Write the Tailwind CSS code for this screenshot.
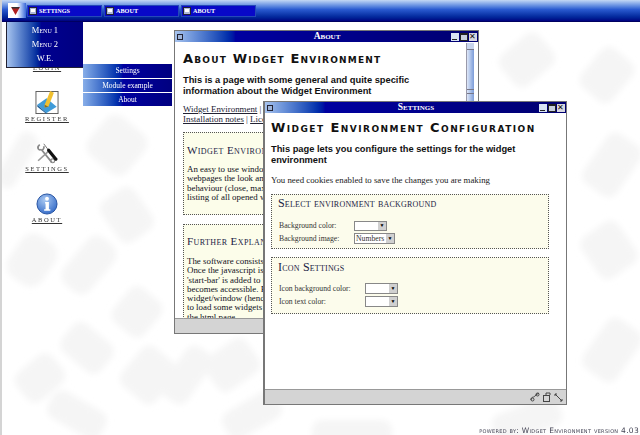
<!DOCTYPE html>
<html lang="en">
<head>
    <meta charset="UTF-8">
    <title>Widget Environment</title>
    <script src="https://cdn.jsdelivr.net/npm/@tailwindcss/browser@4"></script>
</head>
<body class="bg-white">
<div class="relative w-[640px] h-[435px] overflow-hidden bg-white border-l-2 border-[#d4d4d4] font-['Liberation_Serif',serif]">

    <!-- Faded wallpaper -->
    <svg class="absolute left-0 top-0" width="640" height="435" fill="#f5f5f5">
        <defs><filter id="soft"><feGaussianBlur stdDeviation="3"/></filter></defs>
        <g filter="url(#soft)">
            <rect x="10" y="235" width="40" height="50" rx="14" transform="rotate(35 30 260)"/>
            <rect x="70" y="235" width="34" height="60" rx="12" transform="rotate(40 87 265)"/>
            <rect x="115" y="290" width="40" height="44" rx="10" transform="rotate(40 135 312)"/>
            <rect x="60" y="330" width="50" height="36" rx="10" transform="rotate(40 85 348)"/>
            <rect x="15" y="360" width="46" height="36" rx="10" transform="rotate(-40 38 378)"/>
            <rect x="125" y="350" width="44" height="50" rx="10" transform="rotate(40 147 375)"/>
            <rect x="45" y="400" width="60" height="30" rx="10" transform="rotate(30 75 415)"/>
            <rect x="170" y="345" width="30" height="60" rx="10" transform="rotate(35 185 375)"/>
            <rect x="205" y="345" width="50" height="40" rx="10" transform="rotate(-35 230 365)"/>
            <rect x="220" y="400" width="60" height="30" rx="10" transform="rotate(-30 250 415)"/>
            <rect x="310" y="420" width="80" height="30" rx="10"/>
            <rect x="585" y="50" width="40" height="50" rx="10" transform="rotate(40 605 75)"/>
            <rect x="500" y="40" width="50" height="40" rx="10" transform="rotate(-40 525 60)"/>
            <rect x="590" y="135" width="40" height="60" rx="10" transform="rotate(35 610 165)"/>
            <rect x="585" y="225" width="44" height="50" rx="10" transform="rotate(-35 607 250)"/>
            <rect x="590" y="320" width="40" height="60" rx="10" transform="rotate(35 610 350)"/>
            <rect x="490" y="405" width="70" height="30" rx="10" transform="rotate(-20 525 420)"/>
            <rect x="90" y="120" width="50" height="50" rx="12" transform="rotate(40 115 145)"/>
            <rect x="105" y="190" width="40" height="50" rx="10" transform="rotate(-35 125 215)"/>
            <rect x="5" y="130" width="20" height="60" rx="8" transform="rotate(30 15 160)"/>
        </g>
    </svg>

    <!-- Desktop icons -->
    <div class="absolute left-[2px] top-[64px] w-[86px] flex flex-col items-center text-[6.5px] leading-[7px] uppercase tracking-[1.6px] underline text-[#333]">
        <span>Login</span>
        <svg class="mt-[20px]" width="24" height="23" viewBox="0 0 25 25">
            <rect x="0.5" y="0.5" width="24" height="24" fill="#fff" stroke="#555"/>
            <path d="M2 15 L12 8 L23 17 L12 24 Z" fill="#3f9bd8"/>
            <path d="M2 15 L12 24 L12 25 L2 17 Z" fill="#1c5f9a"/>
            <path d="M10 15 L16 0 L20 2 L14 17 L10 18 Z" fill="#f0c030"/>
            <path d="M10 15 L14 17 L10 18 Z" fill="#8a6a20"/>
        </svg>
        <span class="mt-[1px]">Register</span>
        <svg class="mt-[21px]" width="24" height="21" viewBox="0 0 26 26" fill="none">
            <path d="M19 24 L6 8 M4 2 C0 5 2 10 6 8 M9 4 C10 8 7 9 6 8" stroke="#8a8a8a" stroke-width="2.2"/>
            <path d="M2 22 L14 11" stroke="#999" stroke-width="2"/>
            <circle cx="20" cy="22" r="2.4" stroke="#8a8a8a" stroke-width="1.4"/>
            <path d="M9 1 L15 9" stroke="#777" stroke-width="1.2"/>
            <path d="M15 9 L24 20" stroke="#111" stroke-width="4" stroke-linecap="round"/>
        </svg>
        <span class="mt-[1px]">Settings</span>
        <svg class="mt-[21px]" width="22" height="22" viewBox="0 0 22 23">
            <defs><radialGradient id="ball" cx="0.4" cy="0.3" r="0.8"><stop offset="0" stop-color="#a9c9f2"/><stop offset="1" stop-color="#2a63c4"/></radialGradient></defs>
            <circle cx="11" cy="11.5" r="10.5" fill="url(#ball)" stroke="#23509f"/>
            <circle cx="11" cy="6" r="2" fill="#fff"/>
            <path d="M9 9.5 H13 V17 H14.5 V18.5 H8 V17 H9.5 V11 H9 Z" fill="#fff"/>
        </svg>
        <span class="mt-[1px]">About</span>
    </div>

    <!-- Start bar -->
    <div class="absolute left-0 top-0 w-[640px] h-[22px] border-b border-[#000060] bg-linear-to-b from-[#c4d8f4] via-[#2a5ad0] via-45% to-[#000080] flex items-center pl-[6px] gap-[1px]">
        <div class="w-[18px] h-[15px] bg-linear-to-r from-white via-white via-50% to-[#3a66d8] flex items-center pl-[3px]">
            <svg width="9" height="8" viewBox="0 0 9 8"><path d="M0 0 H9 L4.500 8 Z" fill="#b02020"/><path d="M1 0 H8 V1.500 H1 Z" fill="#333"/></svg>
        </div>
        <div class="flex gap-[2px] text-white font-bold text-[6.2px] uppercase">
            <div class="w-[75px] h-[12px] bg-[#0808c8] border border-[#2448b8] flex items-center gap-[2px] pl-[1px]">
                <span class="w-[8px] h-[8px] bg-[#aeb8d8] border border-[#223] flex items-center justify-center"><i class="block w-[4px] h-[3px] bg-white"></i></span><span>Settings</span>
            </div>
            <div class="w-[75px] h-[12px] bg-[#0808c8] border border-[#2448b8] flex items-center gap-[2px] pl-[1px]">
                <span class="w-[8px] h-[8px] bg-[#aeb8d8] border border-[#223] flex items-center justify-center"><i class="block w-[4px] h-[3px] bg-white"></i></span><span>About</span>
            </div>
            <div class="w-[75px] h-[12px] bg-[#0808c8] border border-[#2448b8] flex items-center gap-[2px] pl-[1px]">
                <span class="w-[8px] h-[8px] bg-[#aeb8d8] border border-[#223] flex items-center justify-center"><i class="block w-[4px] h-[3px] bg-white"></i></span><span>About</span>
            </div>
        </div>
    </div>

    <!-- Start menu -->
    <div class="absolute left-[4px] top-[22px] w-[77px] h-[46px] border-b border-l border-[#223] bg-linear-to-r from-[#a8c4ee] via-[#000090] via-45% to-[#000080] flex flex-col items-center justify-around py-[1px] text-white text-[8.500px] [font-variant:small-caps]">
        <span>Menu 1</span>
        <span>Menu 2</span>
        <span>W.E.</span>
    </div>
    <div class="absolute left-[81px] top-[64px] w-[89px] flex flex-col gap-[1px] text-white text-[7.500px]">
        <div class="h-[14px] bg-linear-to-r from-[#88aee8] via-[#0000a0] via-45% to-[#000080] flex items-center justify-center">Settings</div>
        <div class="h-[13px] bg-linear-to-r from-[#88aee8] via-[#0000a0] via-45% to-[#000080] flex items-center justify-center">Module example</div>
        <div class="h-[13px] bg-linear-to-r from-[#88aee8] via-[#0000a0] via-45% to-[#000080] flex items-center justify-center">About</div>
    </div>

    <!-- About window -->
    <div class="absolute left-[172px] top-[30px] w-[305px] h-[304px] border border-[#777] bg-white flex flex-col">
        <div class="h-[11px] shrink-0 bg-linear-to-r from-[#a8c4ee] via-[#0000a0] via-20% to-[#000070] flex items-center justify-between pl-[2px] pr-[1px]">
            <span class="w-[6px] h-[6px] bg-[#9fb4d8] border border-[#223]"></span>
            <span class="text-white text-[9.500px] font-bold [font-variant:small-caps] pl-[20px]">About</span>
            <div class="flex gap-[1px]">
                <span class="w-[8px] h-[8px] bg-[#d8e4f4] flex items-end justify-center"><i class="block w-[5px] h-[1px] bg-[#222] mb-[1px]"></i></span>
                <span class="w-[8px] h-[8px] bg-[#c8d0dc] border border-[#222] border-t-2"></span>
                <span class="w-[8px] h-[8px] bg-[#d8d8e0] text-[#111] text-[8px] leading-[8px] text-center">✕</span>
            </div>
        </div>
        <div class="flex-1 min-h-0 flex">
            <div class="flex-1 min-w-0 overflow-hidden pl-[8px] pt-[10px]">
                <h1 class="font-['DejaVu_Sans',sans-serif] font-bold text-[13px] leading-[14px] [font-variant:small-caps] tracking-[1.2px] text-[#111] whitespace-nowrap">About Widget Environment</h1>
                <p class="mt-[9px] w-[240px] font-['Liberation_Sans',sans-serif] font-bold text-[9.300px] leading-[11px] text-[#111]">This is a page with some general and quite specific information about the Widget Environment</p>
                <p class="mt-[8px] text-[8.900px] leading-[9.500px] text-[#223] whitespace-nowrap"><span class="underline">Widget Environment</span> | <span class="underline">Features</span><br><span class="underline">Installation notes</span> | <span class="underline">License</span></p>
                <div class="mt-[8px] w-[270px] h-[83px] border border-dotted border-[#555] bg-[#fcfdea] px-[3px] pt-[11px] overflow-hidden">
                    <h2 class="text-[11px] leading-[13px] [font-variant:small-caps] tracking-[0.4px] text-[#224] whitespace-nowrap">Widget Environment</h2>
                    <p class="mt-[8px] text-[8.900px] leading-[9.300px] text-[#112] whitespace-nowrap">An easy to use window system<br>webpages the look and feel<br>behaviour (close, maximize<br>listing of all opened windows</p>
                </div>
                <div class="mt-[9px] w-[270px] h-[95px] border-t border-l border-dotted border-[#555] bg-[#fcfdea] px-[3px] pt-[10px] overflow-hidden">
                    <h2 class="text-[11px] leading-[13px] [font-variant:small-caps] tracking-[0.4px] text-[#224] whitespace-nowrap">Further Explanation</h2>
                    <p class="mt-[9px] text-[8.900px] leading-[9.300px] text-[#112] whitespace-nowrap">The software consists of<br>Once the javascript is loaded<br>'start-bar' is added to the<br>becomes accessible. Each<br>widget/window (hence the<br>to load some widgets and<br>the html page</p>
                </div>
            </div>
            <div class="w-[8px] shrink-0 mr-[4px] mt-[1px] bg-linear-to-r from-[#dfe8f8] to-[#7c9cd8] border-l border-[#99a] flex flex-col">
                <i class="block h-[7px] border-b border-[#778] bg-[#c8d4ec]"></i>
                <i class="block h-[5px] mt-[39px] border-y border-[#778]"></i>
            </div>
        </div>
        <div class="h-[15px] shrink-0 bg-[#d4d4d4] border-t border-[#999]"></div>
    </div>

    <!-- Settings window -->
    <div class="absolute left-[261px] top-[101px] w-[304px] h-[304px] border border-[#777] border-l-2 bg-white flex flex-col">
        <div class="h-[11px] shrink-0 bg-linear-to-r from-[#a8c4ee] via-[#0000a0] via-20% to-[#000070] flex items-center justify-between pl-[2px] pr-[1px]">
            <span class="w-[6px] h-[6px] bg-[#9fb4d8] border border-[#223]"></span>
            <span class="text-white text-[9.500px] font-bold [font-variant:small-caps] pl-[20px]">Settings</span>
            <div class="flex gap-[1px]">
                <span class="w-[8px] h-[8px] bg-[#d8e4f4] flex items-end justify-center"><i class="block w-[5px] h-[1px] bg-[#222] mb-[1px]"></i></span>
                <span class="w-[8px] h-[8px] bg-[#c8d0dc] border border-[#222] border-t-2"></span>
                <span class="w-[8px] h-[8px] bg-[#d8d8e0] text-[#111] text-[8px] leading-[8px] text-center">✕</span>
            </div>
        </div>
        <div class="flex-1 min-h-0 pl-[6px] pt-[8px]">
            <h1 class="font-['DejaVu_Sans',sans-serif] font-bold text-[13px] leading-[14px] [font-variant:small-caps] tracking-[1.45px] text-[#111] whitespace-nowrap">Widget Environment Configuration</h1>
            <p class="mt-[9px] w-[270px] font-['Liberation_Sans',sans-serif] font-bold text-[9.300px] leading-[11px] text-[#111]">This page lets you configure the settings for the widget environment</p>
            <p class="mt-[9px] text-[8.800px] leading-[11px] text-[#222]">You need cookies enabled to save the changes you are making</p>
            <div class="mt-[8px] w-[278px] h-[55px] border border-dotted border-[#555] bg-[#fcfcec] pl-[6px] pt-[2px] text-[7.700px] leading-[11px] text-[#333]">
                <h2 class="text-[12px] leading-[13px] [font-variant:small-caps] tracking-[0.2px] text-[#224] whitespace-nowrap">Select environment background</h2>
                <div class="mt-[10px] pl-[1px] flex items-center h-[11px]">
                    <span class="w-[75px]">Background color:</span>
                    <div class="w-[33px] h-[10px] border border-[#888] bg-white flex justify-end"><i class="w-[8px] bg-[#d0d0d0] flex items-center justify-center text-[5px] not-italic text-black">▼</i></div>
                </div>
                <div class="mt-[2px] pl-[1px] flex items-center h-[11px]">
                    <span class="w-[75px]">Background image:</span>
                    <div class="w-[41px] h-[11px] border border-[#888] bg-white flex justify-between pl-[1px]"><span class="text-[7.700px] leading-[9px]">Numbers</span><i class="w-[8px] bg-[#d0d0d0] flex items-center justify-center text-[5px] not-italic text-black">▼</i></div>
                </div>
            </div>
            <div class="mt-[8px] w-[278px] h-[57px] border border-dotted border-[#555] bg-[#fcfcec] pl-[6px] pt-[3px] text-[7.700px] leading-[11px] text-[#333]">
                <h2 class="text-[12px] leading-[13px] [font-variant:small-caps] tracking-[0.2px] text-[#224]">Icon Settings</h2>
                <div class="mt-[9px] pl-[1px] flex items-center h-[11px]">
                    <span class="w-[86px]">Icon background color:</span>
                    <div class="w-[33px] h-[11px] border border-[#888] bg-white flex justify-end"><i class="w-[8px] bg-[#d0d0d0] flex items-center justify-center text-[5px] not-italic text-black">▼</i></div>
                </div>
                <div class="mt-[2px] pl-[1px] flex items-center h-[11px]">
                    <span class="w-[86px]">Icon text color:</span>
                    <div class="w-[33px] h-[11px] border border-[#888] bg-white flex justify-end"><i class="w-[8px] bg-[#d0d0d0] flex items-center justify-center text-[5px] not-italic text-black">▼</i></div>
                </div>
            </div>
        </div>
        <div class="h-[15px] shrink-0 bg-[#d4d4d4] border-t border-[#999] flex items-center justify-end pr-[3px] gap-[2px]">
            <svg width="10" height="10" viewBox="0 0 10 10" fill="none" stroke="#444"><path d="M1 8 C1 4 4 6 5 4 C6 2 8 2 9 1"/><circle cx="2.500" cy="7.500" r="1.500"/><circle cx="7.500" cy="2.500" r="1.500"/></svg>
            <svg width="10" height="10" viewBox="0 0 10 10" fill="none" stroke="#444"><rect x="1.500" y="3.500" width="6" height="6"/><path d="M4 3 V1 H8 V3"/></svg>
            <svg width="9" height="9" viewBox="0 0 9 9" fill="none" stroke="#444"><path d="M1 1 L3 1 M1 1 L1 3 M1 1 L8 8 M8 8 L6 8 M8 8 L8 6"/></svg>
        </div>
    </div>

    <!-- Footer credit -->
    <div class="absolute right-[1px] top-[427px] text-[7.500px] leading-[8px] [font-variant:small-caps] tracking-[0.3px] text-[#445] font-['DejaVu_Sans',sans-serif] whitespace-nowrap">powered by: Widget Environment version 4.03</div>
</div>
</body>
</html>
